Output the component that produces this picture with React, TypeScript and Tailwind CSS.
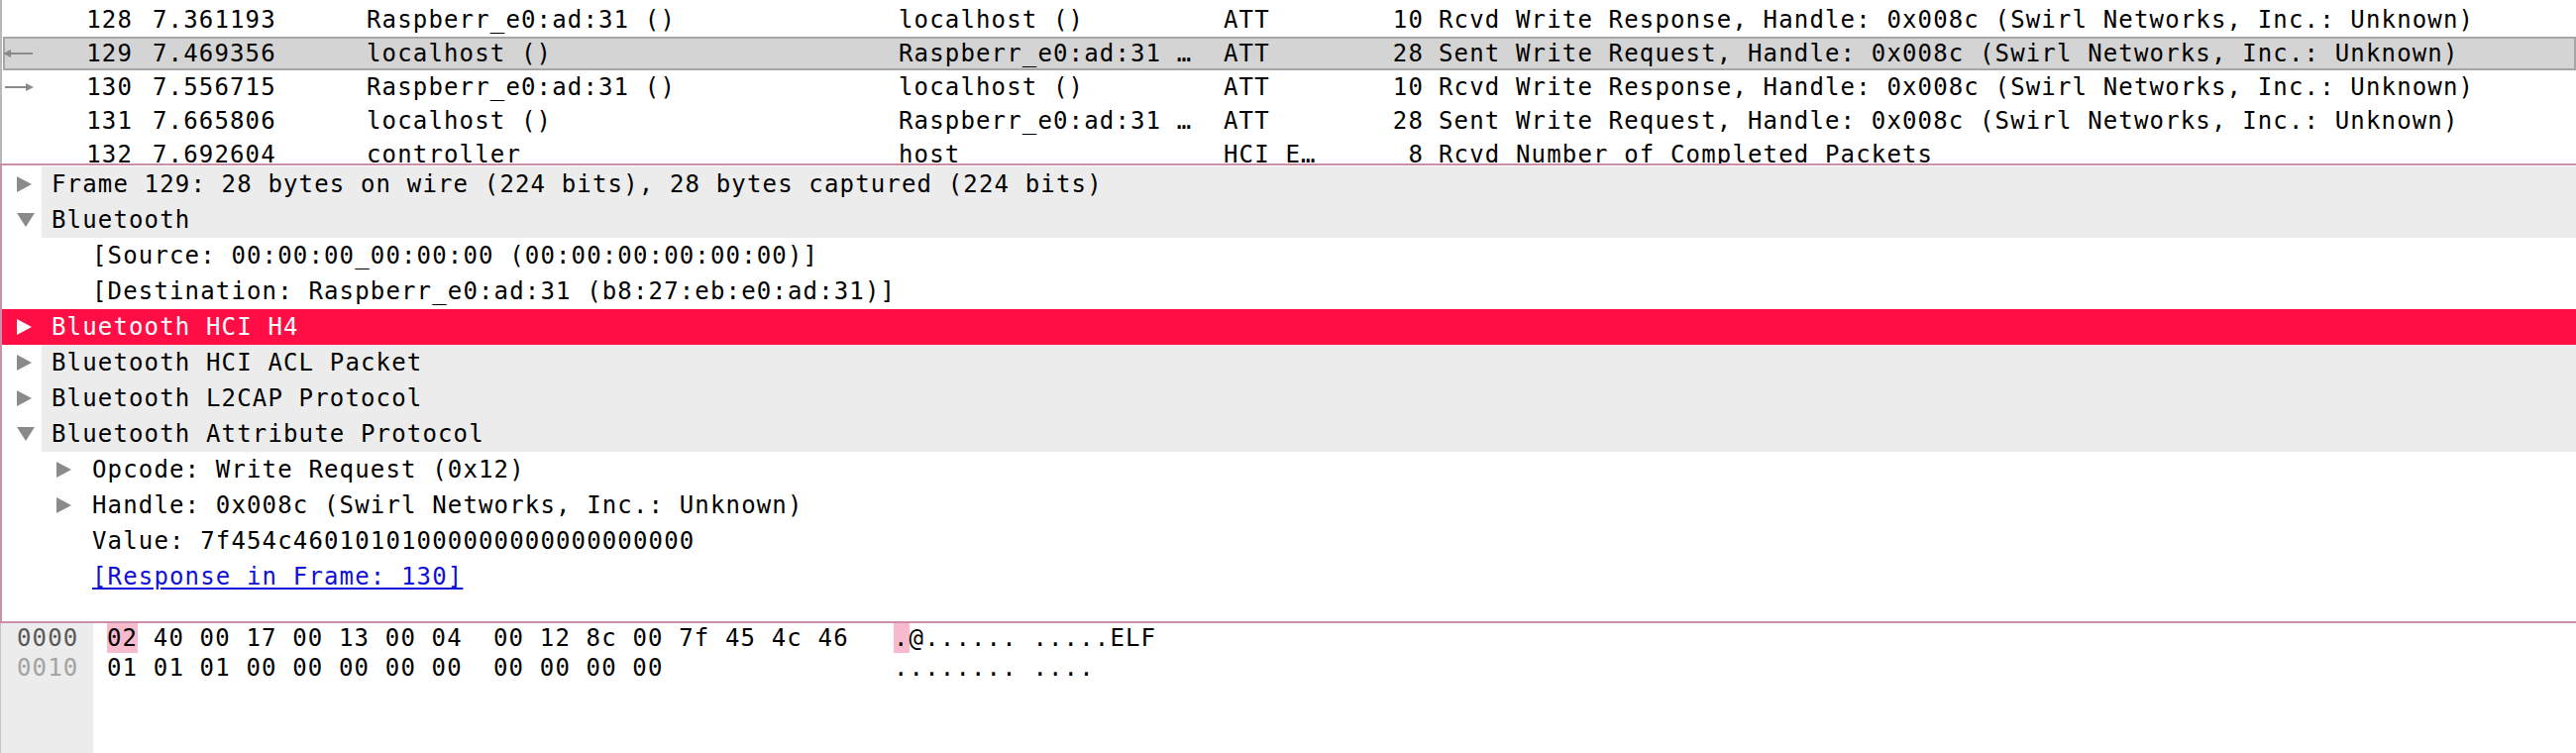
const mono = "font-['DejaVu_Sans_Mono',monospace] text-[24px] tracking-[1.15px] whitespace-pre";

type Packet = {
  no: string;
  time: string;
  src: string;
  dst: string;
  proto: string;
  len: string;
  info: string;
  mark?: 'left' | 'right';
  selected?: boolean;
};

const packets: Packet[] = [
  { no: '128', time: '7.361193', src: 'Raspberr_e0:ad:31 ()', dst: 'localhost ()', proto: 'ATT', len: '10', info: 'Rcvd Write Response, Handle: 0x008c (Swirl Networks, Inc.: Unknown)' },
  { no: '129', time: '7.469356', src: 'localhost ()', dst: 'Raspberr_e0:ad:31 …', proto: 'ATT', len: '28', info: 'Sent Write Request, Handle: 0x008c (Swirl Networks, Inc.: Unknown)', mark: 'left', selected: true },
  { no: '130', time: '7.556715', src: 'Raspberr_e0:ad:31 ()', dst: 'localhost ()', proto: 'ATT', len: '10', info: 'Rcvd Write Response, Handle: 0x008c (Swirl Networks, Inc.: Unknown)', mark: 'right' },
  { no: '131', time: '7.665806', src: 'localhost ()', dst: 'Raspberr_e0:ad:31 …', proto: 'ATT', len: '28', info: 'Sent Write Request, Handle: 0x008c (Swirl Networks, Inc.: Unknown)' },
  { no: '132', time: '7.692604', src: 'controller', dst: 'host', proto: 'HCI E…', len: '8', info: 'Rcvd Number of Completed Packets' },
];

function Mark({ dir }: { dir?: 'left' | 'right' }) {
  if (!dir) return null;
  return (
    <svg width="32" height="12" viewBox="0 0 32 12" className="ml-[-2px]">
      {dir === 'left' ? (
        <>
          <line x1="6" y1="6" x2="30" y2="6" stroke="#8a8a8a" strokeWidth="2" />
          <polygon points="0,6 8,2 8,10" fill="#8a8a8a" />
        </>
      ) : (
        <>
          <line x1="2" y1="6" x2="24" y2="6" stroke="#8a8a8a" strokeWidth="2" />
          <polygon points="31,6 23,2 23,10" fill="#8a8a8a" />
        </>
      )}
    </svg>
  );
}

function PacketRow({ p }: { p: Packet }) {
  return (
    <div
      className={`flex h-[34px] shrink-0 items-center ml-[1px] border-2 ${
        p.selected ? 'bg-[#d4d4d4] border-[#a6a6a6]' : 'border-transparent'
      }`}
    >
      <div className="w-[35px] flex items-center">
        <Mark dir={p.mark} />
      </div>
      <div className="w-[94px] text-right">{p.no}</div>
      <div className="w-[236px] pl-[20px]">{p.time}</div>
      <div className="w-[537px]">{p.src}</div>
      <div className="w-[328px]">{p.dst}</div>
      <div className="w-[150px]">{p.proto}</div>
      <div className="w-[52px] text-right">{p.len}</div>
      <div className="pl-[15px]">{p.info}</div>
    </div>
  );
}

function Tri({ open, color = '#8a8a8a' }: { open?: boolean; color?: string }) {
  return open ? (
    <svg width="18" height="14" viewBox="0 0 18 14">
      <polygon points="0,0 18,0 9,14" fill={color} />
    </svg>
  ) : (
    <svg width="15" height="16" viewBox="0 0 15 16">
      <polygon points="0,0 15,8 0,16" fill={color} />
    </svg>
  );
}

type Node = {
  text: string;
  level: 0 | 1;
  tri?: 'open' | 'closed';
  selected?: boolean;
  link?: boolean;
};

const tree: Node[] = [
  { text: 'Frame 129: 28 bytes on wire (224 bits), 28 bytes captured (224 bits)', level: 0, tri: 'closed' },
  { text: 'Bluetooth', level: 0, tri: 'open' },
  { text: '[Source: 00:00:00_00:00:00 (00:00:00:00:00:00)]', level: 1 },
  { text: '[Destination: Raspberr_e0:ad:31 (b8:27:eb:e0:ad:31)]', level: 1 },
  { text: 'Bluetooth HCI H4', level: 0, tri: 'closed', selected: true },
  { text: 'Bluetooth HCI ACL Packet', level: 0, tri: 'closed' },
  { text: 'Bluetooth L2CAP Protocol', level: 0, tri: 'closed' },
  { text: 'Bluetooth Attribute Protocol', level: 0, tri: 'open' },
  { text: 'Opcode: Write Request (0x12)', level: 1, tri: 'closed' },
  { text: 'Handle: 0x008c (Swirl Networks, Inc.: Unknown)', level: 1, tri: 'closed' },
  { text: 'Value: 7f454c46010101000000000000000000', level: 1 },
  { text: '[Response in Frame: 130]', level: 1, link: true },
];

function TreeRow({ n }: { n: Node }) {
  if (n.level === 0) {
    return (
      <div className={`flex h-[36px] shrink-0 ${n.selected ? 'bg-[#ff0e46] text-white' : ''}`}>
        <div className="w-[40px] flex items-center pl-[15px]">
          {n.tri && <Tri open={n.tri === 'open'} color={n.selected ? '#ffffff' : '#8a8a8a'} />}
        </div>
        <div className={`flex-1 flex items-center pl-[10px] ${n.selected ? '' : 'bg-[#ececec]'}`}>
          {n.text}
        </div>
      </div>
    );
  }
  return (
    <div className="flex h-[36px] shrink-0 items-center">
      <div className="w-[91px] flex items-center pl-[55px]">
        {n.tri && <Tri open={n.tri === 'open'} />}
      </div>
      <div className={n.link ? 'text-[#0f0fd8] underline underline-offset-[3px]' : ''}>{n.text}</div>
    </div>
  );
}

export default function App() {
  return (
    <div className={`w-[2600px] h-[760px] bg-white text-black overflow-hidden flex flex-col ${mono}`}>
      {/* packet list */}
      <div className="h-[165px] shrink-0 overflow-hidden border-l-2 border-[#b8b8b8] pt-[3px] flex flex-col">
        {packets.map((p) => (
          <PacketRow key={p.no} p={p} />
        ))}
      </div>

      {/* packet details */}
      <div className="h-[464px] shrink-0 border-y-2 border-l-2 border-[#cc8ea8] pt-[1px] flex flex-col">
        {tree.map((n) => (
          <TreeRow key={n.text} n={n} />
        ))}
      </div>

      {/* packet bytes */}
      <div className="flex-1 flex border-l border-[#c4c4c4]">
        <div className="w-[93px] bg-[#ececec] pl-[16px] flex flex-col">
          <div className="h-[30px] flex items-center text-[#595959]">0000</div>
          <div className="h-[30px] flex items-center text-[#a3a3a3]">0010</div>
        </div>
        <div className="flex flex-col pl-[14px]">
          <div className="h-[30px] flex">
            <div className="w-[794px] flex items-center">
              <span className="bg-[#f8bacd] h-full flex items-center">02</span>
              {' 40 00 17 00 13 00 04  00 12 8c 00 7f 45 4c 46'}
            </div>
            <div className="flex items-center">
              <span className="bg-[#f8bacd] h-full flex items-center">.</span>
              {'@...... .....ELF'}
            </div>
          </div>
          <div className="h-[30px] flex">
            <div className="w-[794px] flex items-center">01 01 01 00 00 00 00 00  00 00 00 00</div>
            <div className="flex items-center">{'........ ....'}</div>
          </div>
        </div>
      </div>
    </div>
  );
}
